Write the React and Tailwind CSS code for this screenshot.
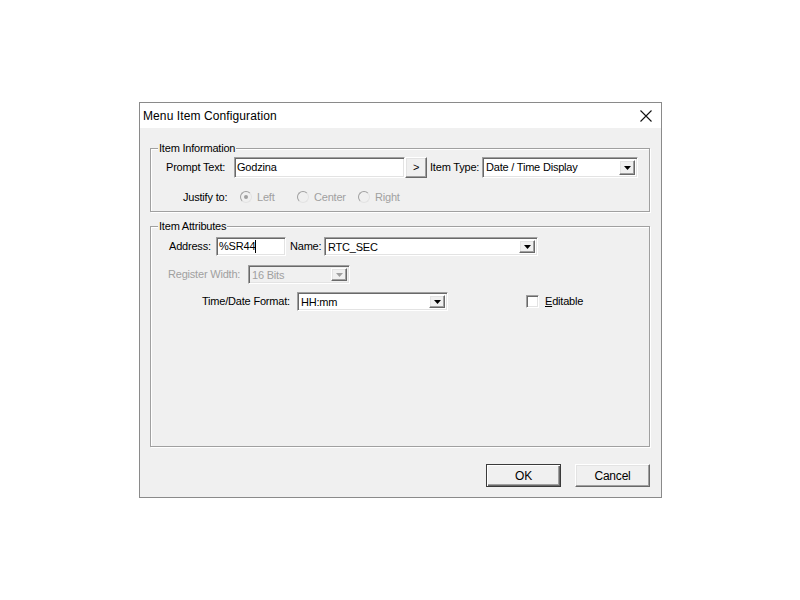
import React from 'react';

// sunken edit / combo frame, classic Windows look
const sunken =
  'border border-t-[#a0a0a0] border-l-[#a0a0a0] border-r-white border-b-white shadow-[inset_1px_1px_0_#696969,inset_-1px_-1px_0_#e3e3e3]';
const raised =
  'border border-t-white border-l-white border-r-[#696969] border-b-[#696969] shadow-[inset_-1px_-1px_0_#a0a0a0,inset_1px_1px_0_#e3e3e3]';

const Arrow = ({ disabled }) => (
  <div className={`w-[16px] h-full flex items-center justify-center bg-[#f0f0f0] ${raised}`}>
    <svg width="7" height="4" viewBox="0 0 7 4">
      <path d="M0 0h7L3.5 4z" fill={disabled ? '#a0a0a0' : '#000'} />
    </svg>
  </div>
);

const Combo = ({ value, width, height = 'h-[19px]', disabled }) => (
  <div
    className={`${sunken} ${height} flex items-stretch p-[2px] ${disabled ? 'bg-[#f0f0f0]' : 'bg-white'}`}
    style={{ width }}
  >
    <span className={`flex-1 pl-[1px] leading-[15px] ${disabled ? 'text-[#a0a0a0]' : 'text-black'}`}>{value}</span>
    <Arrow disabled={disabled} />
  </div>
);

const Radio = ({ label, checked, className }) => (
  <div className={`flex items-center ${className}`}>
    <div className="w-[12px] h-[12px] rounded-full border border-t-[#a0a0a0] border-l-[#a0a0a0] border-r-[#e3e3e3] border-b-[#e3e3e3] bg-[#f0f0f0] flex items-center justify-center">
      {checked && <div className="w-[4px] h-[4px] rounded-full bg-[#a0a0a0]" />}
    </div>
    <span className="ml-[5px] text-[#a0a0a0]">{label}</span>
  </div>
);

const Group = ({ title, className, children }) => (
  <div className={`relative border border-[#a0a0a0] shadow-[inset_1px_1px_0_white,1px_1px_0_white] ${className}`}>
    <span className="absolute -top-[8px] left-[7px] bg-[#f0f0f0] px-[1px] leading-[14px]">{title}</span>
    {children}
  </div>
);

export default function App() {
  return (
    <div className="w-[800px] h-[600px] bg-white pt-[102px] pl-[139px] font-['Liberation_Sans',Arial,sans-serif] text-[11px] tracking-[-0.2px] text-black">
      <div className="w-[523px] h-[396px] border border-[#8a8a8a] bg-[#f0f0f0] flex flex-col">
        {/* title bar */}
        <div className="h-[25px] bg-white flex items-center justify-between pl-[3px] pr-[9px]">
          <span className="text-[12px] text-black tracking-[0.1px]">Menu Item Configuration</span>
          <svg width="12" height="12" viewBox="0 0 12 12">
            <path d="M0.5 0.5L11.5 11.5M11.5 0.5L0.5 11.5" stroke="#111" strokeWidth="1.1" />
          </svg>
        </div>

        <div className="pl-[10px] pt-[20px]">
          <Group title="Item Information" className="w-[500px] h-[64px]">
            <div className="flex items-center h-[21px] mt-[8px] pl-[15px]">
              <span className="w-[68px]">Prompt Text:</span>
              <div className={`${sunken} w-[171px] h-[21px] bg-white pl-[2px] leading-[19px]`}>Godzina</div>
              <div className={`${raised} w-[22px] h-[21px] bg-[#f0f0f0] flex items-center justify-center`}>&gt;</div>
              <span className="ml-[3px] w-[52px]">Item Type:</span>
              <Combo value="Date / Time Display" width="156px" height="h-[21px]" />
            </div>
            <div className="flex items-center h-[16px] mt-[11px] pl-[32px]">
              <span className="w-[57px]">Justify to:</span>
              <Radio label="Left" checked className="w-[57px]" />
              <Radio label="Center" className="w-[61px]" />
              <Radio label="Right" />
            </div>
          </Group>

          <Group title="Item Attributes" className="w-[500px] h-[221px] mt-[14px]">
            <div className="flex items-center h-[19px] mt-[10px] pl-[18px]">
              <span className="w-[47px]">Address:</span>
              <div className={`${sunken} w-[70px] h-[19px] bg-white pl-[2px] leading-[17px] flex items-center`}>
                %SR44<span className="inline-block w-[1px] h-[13px] bg-black" />
              </div>
              <span className="ml-[4px] w-[34px]">Name:</span>
              <Combo value="RTC_SEC" width="214px" />
            </div>
            <div className="flex items-center h-[19px] mt-[9px] pl-[17px]">
              <span className="w-[80px] text-[#a0a0a0]">Register Width:</span>
              <Combo value="16 Bits" width="102px" disabled />
            </div>
            <div className="flex items-center h-[19px] mt-[8px] pl-[51px]">
              <span className="w-[95px]">Time/Date Format:</span>
              <Combo value="HH:mm" width="151px" />
              <div className="ml-[78px] w-[13px] h-[13px] bg-white border border-t-[#a0a0a0] border-l-[#a0a0a0] border-r-white border-b-white shadow-[inset_1px_1px_0_#696969,inset_-1px_-1px_0_#e3e3e3]" />
              <span className="ml-[6px]"><span className="underline">E</span>ditable</span>
            </div>
          </Group>

          <div className="flex justify-end gap-[14px] mt-[17px] pr-[11px]">
            <button className="w-[75px] h-[23px] border border-[#3a3a3a] bg-[#f0f0f0] shadow-[inset_1px_1px_0_white,inset_-1px_-1px_0_#696969,inset_-2px_-2px_0_#a0a0a0] text-[12px]">
              OK
            </button>
            <button className={`w-[75px] h-[23px] ${raised} bg-[#f0f0f0] text-[12px]`}>Cancel</button>
          </div>
        </div>
      </div>
    </div>
  );
}
